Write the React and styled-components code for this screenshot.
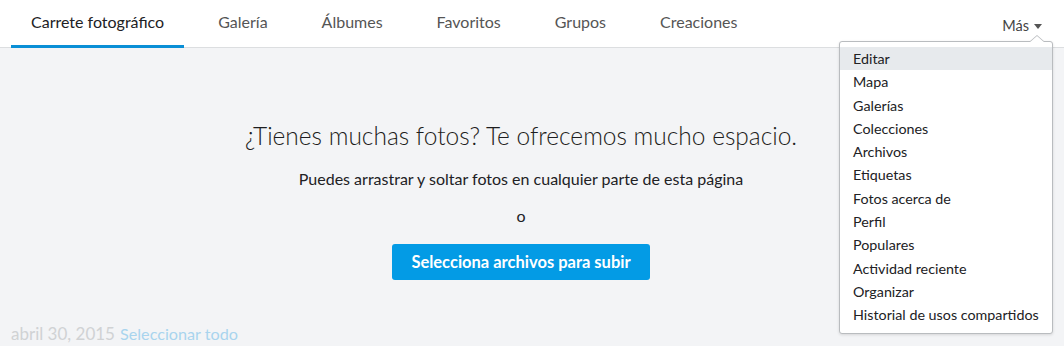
import React from "react";
import styled, { createGlobalStyle } from "styled-components";

const Global = createGlobalStyle`
  html, body {
    margin: 0;
    padding: 0;
    background: #f3f4f6;
    font-family: "Lato", "Liberation Sans", sans-serif;
  }
`;

const Page = styled.div`
  width: 1064px;
  height: 346px;
  display: flex;
  flex-direction: column;
  overflow: hidden;
  background: #f3f4f6;
`;

const Nav = styled.div`
  height: 47px;
  flex: 0 0 47px;
  background: #fff;
  border-bottom: 1px solid #dcdee0;
  display: flex;
  align-items: stretch;
  padding: 0 0 0 11px;
`;

const Tab = styled.div`
  display: flex;
  align-items: center;
  padding: 0 20px 2px;
  margin-right: 14px;
  font-size: 16px;
  color: ${(p) => (p.active ? "#212124" : "#555")};
  border-bottom: 3px solid ${(p) => (p.active ? "#0a8fd6" : "transparent")};
  margin-bottom: -1px;
`;

const Spacer = styled.div`
  flex: 1;
`;

const MoreWrap = styled.div`
  position: relative;
  display: flex;
  align-items: center;
  padding: 4px 22px 0 0;
  font-size: 14.5px;
  color: #444;
`;

const Caret = styled.span`
  display: inline-block;
  margin-left: 5px;
  margin-top: 2px;
  width: 0;
  height: 0;
  border-left: 4px solid transparent;
  border-right: 4px solid transparent;
  border-top: 5px solid #555;
`;

const Menu = styled.div`
  position: absolute;
  top: 41px;
  right: 11px;
  width: 212px;
  background: #fff;
  border: 1px solid #b9bcbf;
  border-radius: 3px;
  box-shadow: 0 1px 3px rgba(0, 0, 0, 0.12);
  padding: 5px 0 6px;
  z-index: 5;

  &::before,
  &::after {
    content: "";
    position: absolute;
    right: 7px;
    width: 0;
    height: 0;
    border-left: 8px solid transparent;
    border-right: 8px solid transparent;
  }
  &::before {
    top: -7px;
    border-bottom: 7px solid #b9bcbf;
  }
  &::after {
    top: -6px;
    border-bottom: 7px solid #fff;
  }
`;

const Item = styled.div`
  height: 23.3px;
  line-height: 23.3px;
  padding: 0 13px;
  font-size: 14.3px;
  color: #212124;
  background: ${(p) => (p.active ? "#e7eaed" : "transparent")};
  white-space: nowrap;
`;

const Main = styled.div`
  flex: 1;
  display: flex;
  flex-direction: column;
  align-items: center;
  padding: 73px 22px 0 0;
`;

const Title = styled.div`
  font-size: 24.5px;
  font-weight: 300;
  color: #1d1d20;
  line-height: 30px;
`;

const Sub = styled.div`
  margin-top: 18px;
  font-size: 16px;
  color: #212124;
  line-height: 20px;
`;

const Or = styled.div`
  margin-top: 17px;
  font-size: 16px;
  color: #212124;
  line-height: 20px;
`;

const Button = styled.button`
  margin-top: 18px;
  width: 258px;
  height: 36px;
  border: none;
  border-radius: 3px;
  background: #039be5;
  color: #fff;
  font-family: inherit;
  font-weight: 700;
  font-size: 16.5px;
  cursor: pointer;
`;

const Footer = styled.div`
  display: flex;
  align-items: baseline;
  gap: 5px;
  padding: 0 0 2px 11px;
`;

const DateText = styled.span`
  font-size: 17px;
  color: #d0d2d4;
`;

const SelectAll = styled.span`
  font-size: 16.2px;
  color: #a9d4ee;
`;

const tabs = ["Carrete fotográfico", "Galería", "Álbumes", "Favoritos", "Grupos", "Creaciones"];
const items = [
  "Editar",
  "Mapa",
  "Galerías",
  "Colecciones",
  "Archivos",
  "Etiquetas",
  "Fotos acerca de",
  "Perfil",
  "Populares",
  "Actividad reciente",
  "Organizar",
  "Historial de usos compartidos",
];

export default function App() {
  return (
    <Page>
      <Global />
      <Nav>
        {tabs.map((t, i) => (
          <Tab key={t} active={i === 0}>
            {t}
          </Tab>
        ))}
        <Spacer />
        <MoreWrap>
          Más
          <Caret />
          <Menu>
            {items.map((it, i) => (
              <Item key={it} active={i === 0}>
                {it}
              </Item>
            ))}
          </Menu>
        </MoreWrap>
      </Nav>
      <Main>
        <Title>¿Tienes muchas fotos? Te ofrecemos mucho espacio.</Title>
        <Sub>Puedes arrastrar y soltar fotos en cualquier parte de esta página</Sub>
        <Or>o</Or>
        <Button>Selecciona archivos para subir</Button>
      </Main>
      <Footer>
        <DateText>abril 30, 2015</DateText>
        <SelectAll>Seleccionar todo</SelectAll>
      </Footer>
    </Page>
  );
}
